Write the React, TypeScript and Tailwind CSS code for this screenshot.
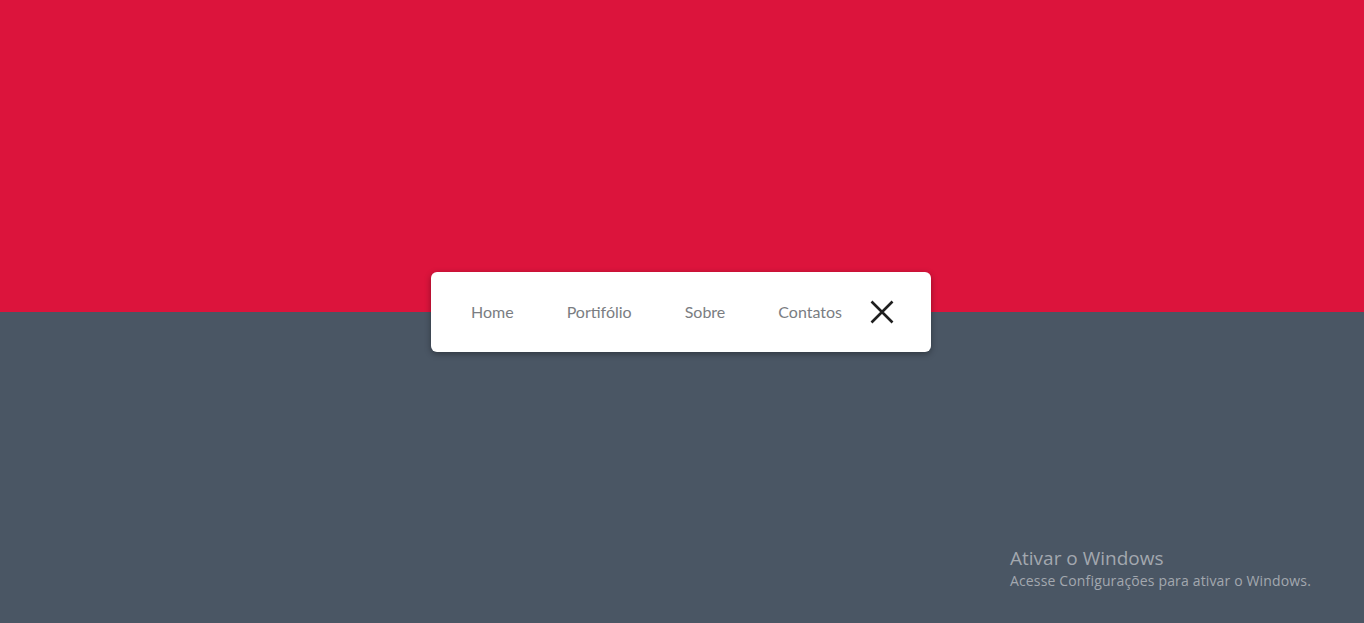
import React from "react";

const LINKS = ["Home", "Portifólio", "Sobre", "Contatos"];

export default function App() {
    return (
        <div className="relative w-full h-[623px] overflow-hidden bg-[#4a5664] font-['Lato','Open_Sans',sans-serif]">
            {/* Top band */}
            <div className="h-[312px] bg-[#dc143c]" />

            {/* Floating nav card */}
            <div className="flex justify-center -mt-10 pr-[2px]">
                <nav className="w-[500px] h-20 bg-white rounded-md shadow-[0_2px_6px_rgba(0,0,0,0.35)] flex items-center pl-10">
                    <ul className="flex items-center gap-[53px] -mt-[1px]">
                        {LINKS.map((link) => (
                            <li key={link}>
                                <a href="#" className="text-[16px] text-[#7a7d82] leading-none">
                                    {link}
                                </a>
                            </li>
                        ))}
                    </ul>
                    <button className="ml-7 w-6 h-6 flex items-center justify-center">
                        <svg viewBox="0 0 24 24" className="w-6 h-6" fill="none" stroke="#1f1f1f" strokeWidth="2.6">
                            <path d="M1.5 1.5L22.5 22.5M22.5 1.5L1.5 22.5" />
                        </svg>
                    </button>
                </nav>
            </div>

            {/* Windows activation watermark */}
            <div className="absolute left-[1010px] top-[546px] text-[#a3a8af] font-['Open_Sans',sans-serif] pointer-events-none">
                <div className="text-[19px] leading-6">Ativar o Windows</div>
                <div className="text-[14px] leading-5 mt-[1px] tracking-[0.15px]">Acesse Configurações para ativar o Windows.</div>
            </div>
        </div>
    );
}
